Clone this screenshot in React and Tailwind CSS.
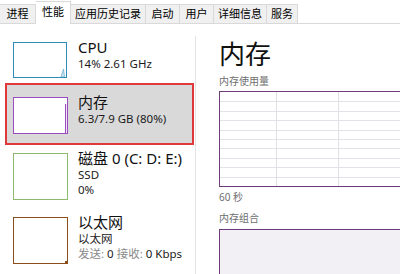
import React from "react";

const tabs = [
  { label: "进程", w: "w-[36px]" },
  { label: "性能", w: "w-[35px]", sel: true },
  { label: "应用历史记录", w: "w-[75px]" },
  { label: "启动", w: "w-[34px]" },
  { label: "用户", w: "w-[34px]" },
  { label: "详细信息", w: "w-[53px]" },
  { label: "服务", w: "w-[31px]" },
];

function Row({ h, gmt, tmt, sel, graph, title, lines }) {
  return (
    <div
      className={
        "ml-[5px] w-[189px] border-2 flex items-start pl-[6px] " +
        h +
        (sel ? " border-[#e0393b] bg-[#d9d9d9]" : " border-transparent")
      }
    >
      <div className={"w-[65px] shrink-0 " + gmt}>{graph}</div>
      <div className={"flex flex-col " + tmt}>
        <div className="text-[15px] leading-[18px] text-[#111] whitespace-nowrap">{title}</div>
        {lines.map((l, i) => (
          <div key={i} className="text-[11.5px] leading-[15px] text-[#1a1a1a] whitespace-nowrap">
            {l}
          </div>
        ))}
      </div>
    </div>
  );
}

export default function App() {
  const hLines = [1, 2, 3, 4, 5, 6, 7, 8, 9].map((k) => Math.round(k * 9.4) + 0.5);
  return (
    <div className="w-[400px] h-[274px] overflow-hidden bg-white font-['Noto_Sans','Noto_Sans_CJK_SC',sans-serif] text-black">
      {/* tab bar */}
      <div className="flex items-end h-[24px] border-b border-[#d9d9d9]">
        {tabs.map((t) =>
          t.sel ? (
            <div
              key={t.label}
              className={"h-[23px] -mb-px bg-white border-t border-r border-[#d9d9d9] text-center text-[11px] leading-[19px] " + t.w}
            >
              {t.label}
            </div>
          ) : (
            <div
              key={t.label}
              className={"h-[19px] bg-[#f0f0f0] border-t border-r border-[#d9d9d9] text-center text-[11px] leading-[17px] " + t.w}
            >
              {t.label}
            </div>
          )
        )}
      </div>

      <div className="flex h-[250px]">
        {/* left pane */}
        <div className="w-[195px] shrink-0 flex flex-col">
          <Row
            h="h-[59px]"
            gmt="mt-[16px]"
            tmt="mt-[12px]"
            title="CPU"
            lines={["14% 2.61 GHz"]}
            graph={
              <div className="w-[54px] h-[36px] border border-[#2b8cb8] bg-white">
                <svg width="52" height="34" className="block">
                  <path d="M47 34 L49.5 26 L50.5 34 Z" fill="#cfe6f1" stroke="#6fb3d3" strokeWidth="0.8" />
                </svg>
              </div>
            }
          />
          <Row
            h="h-[62px]"
            gmt="mt-[12px]"
            tmt="mt-[8px]"
            sel
            title="内存"
            lines={["6.3/7.9 GB (80%)"]}
            graph={
              <div className="w-[55px] h-[37px] border border-[#9b4dbf] bg-white">
                <svg width="53" height="35" className="block">
                  <rect x="51" y="6" width="2" height="29" fill="#f1e4f6" />
                  <line x1="51.5" y1="6" x2="51.5" y2="35" stroke="#9b4dbf" strokeWidth="1" />
                </svg>
              </div>
            }
          />
          <Row
            h="h-[62px]"
            gmt="mt-[6px]"
            tmt="mt-[2px]"
            title="磁盘 0 (C: D: E:)"
            lines={["SSD", "0%"]}
            graph={<div className="w-[55px] h-[47px] border border-[#8dbb6b] bg-white" />}
          />
          <Row
            h="h-[67px]"
            gmt="mt-[8px]"
            tmt="mt-[4px]"
            title="以太网"
            lines={[
              "以太网",
              <span key="s">
                <span className="text-[#8a8a8a]">发送:</span> 0 <span className="text-[#8a8a8a]">接收:</span> 0 Kbps
              </span>,
            ]}
            graph={
              <div className="w-[55px] h-[47px] border border-[#8a4d1c] bg-white relative">
                <div className="absolute right-0 bottom-0 w-[2px] h-[2px] bg-[#8a4d1c]" />
              </div>
            }
          />
        </div>

        {/* separator */}
        <div className="w-px shrink-0 bg-[#e3e3e3] mt-[12px]" />

        {/* right pane */}
        <div className="flex-1 pl-[23px] flex flex-col min-w-0">
          <div className="mt-[14px] text-[26px] leading-[32px] text-[#111] whitespace-nowrap">内存</div>
          <div className="mt-[4px] text-[10px] leading-[14px] text-[#6e6e6e] whitespace-nowrap">内存使用量</div>
          <div className="mt-[3px] w-[200px] h-[96px] shrink-0 border border-[#6a3d7a] bg-white">
            <svg width="200" height="94" className="block" shapeRendering="crispEdges">
              {hLines.map((y) => (
                <line key={y} x1="0" y1={y} x2="200" y2={y} stroke="#e6e0e9" strokeWidth="1" />
              ))}
              {[56.5, 118.5, 180.5].map((x) => (
                <line key={x} x1={x} y1="0" x2={x} y2="94" stroke="#e3dfe6" strokeWidth="1" />
              ))}
            </svg>
          </div>
          <div className="mt-[3px] text-[10px] leading-[14px] text-[#6e6e6e] whitespace-nowrap">60 秒</div>
          <div className="mt-[7px] text-[10px] leading-[14px] text-[#6e6e6e] whitespace-nowrap">内存组合</div>
          <div className="mt-[4px] w-[200px] h-[60px] shrink-0 border border-[#6a3d7a] bg-[#f3f0f5]" />
        </div>
      </div>
    </div>
  );
}
